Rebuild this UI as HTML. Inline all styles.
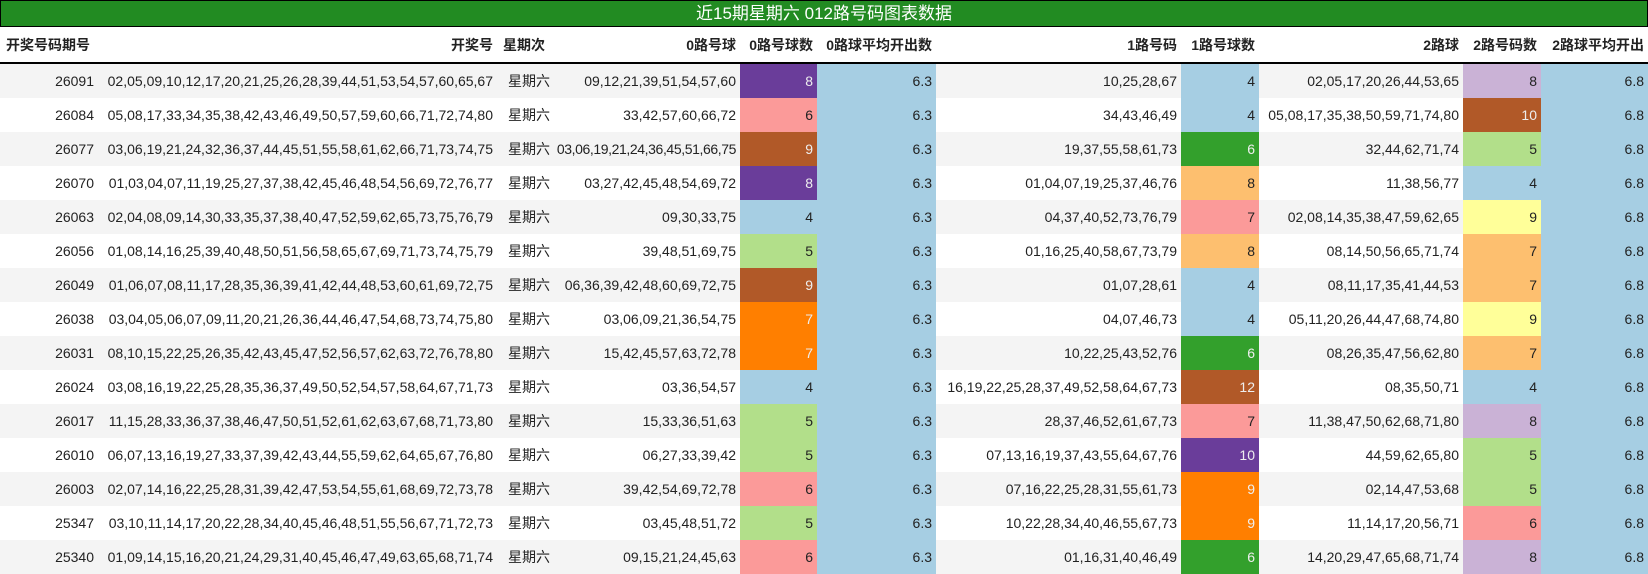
<!DOCTYPE html>
<html><head><meta charset="utf-8"><style>
body{margin:0;width:1648px;height:574px;overflow:hidden;background:#fff;font-family:"Liberation Sans","Noto Sans CJK SC",sans-serif;font-size:14px;color:#222}
.t{height:25px;background:#228b22;border:1px solid #000;color:#fff;text-align:center;font-size:17px;line-height:25px;box-sizing:content-box;width:1646px}
table{border-collapse:collapse;table-layout:fixed;width:1648px}
td,th{padding:0 4px;text-align:right;white-space:nowrap;overflow:hidden}
th{height:35px;font-weight:bold;border-bottom:2px solid #000;font-size:14px}
td{height:34px}
th.l{text-align:left;padding-left:6px}
td.n{letter-spacing:-0.4px;padding-left:0}
tr:nth-child(even) td{background:#f4f4f4}
tr td.a{background:#a6cee3!important}
.P{background:#6a3d9a!important;color:#eee}
.S{background:#fb9a99!important}
.B{background:#b15928!important;color:#eee}
.L{background:#a6cee3!important}
.G{background:#b2df8a!important}
.D{background:#33a02c!important;color:#eee}
.O{background:#fdbf6f!important}
.R{background:#ff7f00!important;color:#eee}
.Y{background:#ffff99!important}
.V{background:#cab2d6!important}
</style></head><body>
<div class="t">近15期星期六 012路号码图表数据</div>
<table>
<colgroup><col style="width:98px"><col style="width:399px"><col style="width:57px"><col style="width:186px"><col style="width:77px"><col style="width:119px"><col style="width:245px"><col style="width:78px"><col style="width:204px"><col style="width:78px"><col style="width:107px"></colgroup>
<tr><th class="l">开奖号码期号</th><th>开奖号</th><th class="l">星期次</th><th>0路号球</th><th>0路号球数</th><th>0路球平均开出数</th><th>1路号码</th><th>1路号球数</th><th>2路球</th><th>2路号码数</th><th>2路球平均开出</th></tr>
<tr><td>26091</td><td>02,05,09,10,12,17,20,21,25,26,28,39,44,51,53,54,57,60,65,67</td><td>星期六</td><td>09,12,21,39,51,54,57,60</td><td class="P">8</td><td class="a">6.3</td><td>10,25,28,67</td><td class="L">4</td><td>02,05,17,20,26,44,53,65</td><td class="V">8</td><td class="a">6.8</td></tr>
<tr><td>26084</td><td>05,08,17,33,34,35,38,42,43,46,49,50,57,59,60,66,71,72,74,80</td><td>星期六</td><td>33,42,57,60,66,72</td><td class="S">6</td><td class="a">6.3</td><td>34,43,46,49</td><td class="L">4</td><td>05,08,17,35,38,50,59,71,74,80</td><td class="B">10</td><td class="a">6.8</td></tr>
<tr><td>26077</td><td>03,06,19,21,24,32,36,37,44,45,51,55,58,61,62,66,71,73,74,75</td><td>星期六</td><td class="n">03,06,19,21,24,36,45,51,66,75</td><td class="B">9</td><td class="a">6.3</td><td>19,37,55,58,61,73</td><td class="D">6</td><td>32,44,62,71,74</td><td class="G">5</td><td class="a">6.8</td></tr>
<tr><td>26070</td><td>01,03,04,07,11,19,25,27,37,38,42,45,46,48,54,56,69,72,76,77</td><td>星期六</td><td>03,27,42,45,48,54,69,72</td><td class="P">8</td><td class="a">6.3</td><td>01,04,07,19,25,37,46,76</td><td class="O">8</td><td>11,38,56,77</td><td class="L">4</td><td class="a">6.8</td></tr>
<tr><td>26063</td><td>02,04,08,09,14,30,33,35,37,38,40,47,52,59,62,65,73,75,76,79</td><td>星期六</td><td>09,30,33,75</td><td class="L">4</td><td class="a">6.3</td><td>04,37,40,52,73,76,79</td><td class="S">7</td><td>02,08,14,35,38,47,59,62,65</td><td class="Y">9</td><td class="a">6.8</td></tr>
<tr><td>26056</td><td>01,08,14,16,25,39,40,48,50,51,56,58,65,67,69,71,73,74,75,79</td><td>星期六</td><td>39,48,51,69,75</td><td class="G">5</td><td class="a">6.3</td><td>01,16,25,40,58,67,73,79</td><td class="O">8</td><td>08,14,50,56,65,71,74</td><td class="O">7</td><td class="a">6.8</td></tr>
<tr><td>26049</td><td>01,06,07,08,11,17,28,35,36,39,41,42,44,48,53,60,61,69,72,75</td><td>星期六</td><td>06,36,39,42,48,60,69,72,75</td><td class="B">9</td><td class="a">6.3</td><td>01,07,28,61</td><td class="L">4</td><td>08,11,17,35,41,44,53</td><td class="O">7</td><td class="a">6.8</td></tr>
<tr><td>26038</td><td>03,04,05,06,07,09,11,20,21,26,36,44,46,47,54,68,73,74,75,80</td><td>星期六</td><td>03,06,09,21,36,54,75</td><td class="R">7</td><td class="a">6.3</td><td>04,07,46,73</td><td class="L">4</td><td>05,11,20,26,44,47,68,74,80</td><td class="Y">9</td><td class="a">6.8</td></tr>
<tr><td>26031</td><td>08,10,15,22,25,26,35,42,43,45,47,52,56,57,62,63,72,76,78,80</td><td>星期六</td><td>15,42,45,57,63,72,78</td><td class="R">7</td><td class="a">6.3</td><td>10,22,25,43,52,76</td><td class="D">6</td><td>08,26,35,47,56,62,80</td><td class="O">7</td><td class="a">6.8</td></tr>
<tr><td>26024</td><td>03,08,16,19,22,25,28,35,36,37,49,50,52,54,57,58,64,67,71,73</td><td>星期六</td><td>03,36,54,57</td><td class="L">4</td><td class="a">6.3</td><td>16,19,22,25,28,37,49,52,58,64,67,73</td><td class="B">12</td><td>08,35,50,71</td><td class="L">4</td><td class="a">6.8</td></tr>
<tr><td>26017</td><td>11,15,28,33,36,37,38,46,47,50,51,52,61,62,63,67,68,71,73,80</td><td>星期六</td><td>15,33,36,51,63</td><td class="G">5</td><td class="a">6.3</td><td>28,37,46,52,61,67,73</td><td class="S">7</td><td>11,38,47,50,62,68,71,80</td><td class="V">8</td><td class="a">6.8</td></tr>
<tr><td>26010</td><td>06,07,13,16,19,27,33,37,39,42,43,44,55,59,62,64,65,67,76,80</td><td>星期六</td><td>06,27,33,39,42</td><td class="G">5</td><td class="a">6.3</td><td>07,13,16,19,37,43,55,64,67,76</td><td class="P">10</td><td>44,59,62,65,80</td><td class="G">5</td><td class="a">6.8</td></tr>
<tr><td>26003</td><td>02,07,14,16,22,25,28,31,39,42,47,53,54,55,61,68,69,72,73,78</td><td>星期六</td><td>39,42,54,69,72,78</td><td class="S">6</td><td class="a">6.3</td><td>07,16,22,25,28,31,55,61,73</td><td class="R">9</td><td>02,14,47,53,68</td><td class="G">5</td><td class="a">6.8</td></tr>
<tr><td>25347</td><td>03,10,11,14,17,20,22,28,34,40,45,46,48,51,55,56,67,71,72,73</td><td>星期六</td><td>03,45,48,51,72</td><td class="G">5</td><td class="a">6.3</td><td>10,22,28,34,40,46,55,67,73</td><td class="R">9</td><td>11,14,17,20,56,71</td><td class="S">6</td><td class="a">6.8</td></tr>
<tr><td>25340</td><td>01,09,14,15,16,20,21,24,29,31,40,45,46,47,49,63,65,68,71,74</td><td>星期六</td><td>09,15,21,24,45,63</td><td class="S">6</td><td class="a">6.3</td><td>01,16,31,40,46,49</td><td class="D">6</td><td>14,20,29,47,65,68,71,74</td><td class="V">8</td><td class="a">6.8</td></tr>
</table>
</body></html>
